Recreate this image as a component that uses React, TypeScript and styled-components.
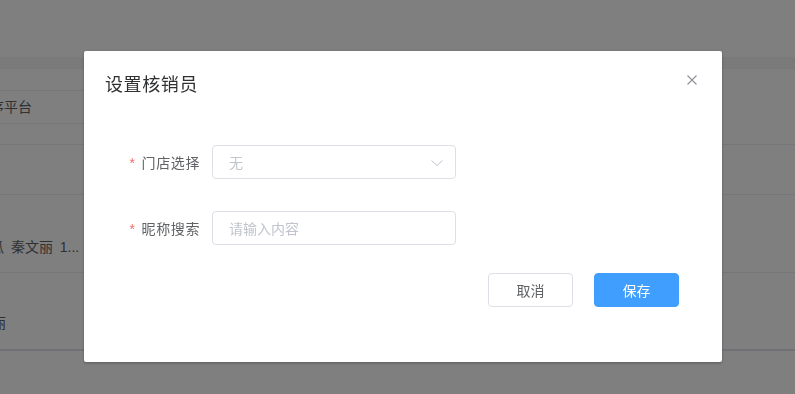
import styled, { createGlobalStyle } from 'styled-components'

const GlobalStyle = createGlobalStyle`
  html, body {
    margin: 0;
    padding: 0;
    background: #fff;
    font-family: "Liberation Sans", "Noto Sans CJK SC", sans-serif;
    font-size: 14px;
    color: #606266;
  }
  * { box-sizing: border-box; }
`

// page behind the mask
const Page = styled.div`
  height: 394px;
  padding-top: 57px;
  overflow: hidden;
`

const TableHead = styled.div`
  height: 12px;
  background: #f5f5f5;
`

const Row = styled.div<{ $h: number; $pad?: number; $thick?: boolean }>`
  height: ${(p) => p.$h}px;
  padding-top: ${(p) => p.$pad ?? 0}px;
  border-bottom: ${(p) => (p.$thick ? 2 : 1)}px solid ${(p) => (p.$thick ? '#e0e2ea' : '#ebeef5')};
  line-height: 20px;
  white-space: nowrap;
  overflow: hidden;
`

const SearchBox = styled.div`
  width: 420px;
  height: 34px;
  border-top: 1px solid #ebeef5;
  border-bottom: 1px solid #ebeef5;
  display: flex;
  align-items: center;
`

const CellText = styled.span<{ $shift: number }>`
  display: inline-block;
  margin-left: ${(p) => p.$shift}px;
  color: #606266;
  word-spacing: 3px;
`

// dialog
const Mask = styled.div`
  position: fixed;
  inset: 0;
  background: rgba(0, 0, 0, 0.5);
  padding: 51px 0 0 84px;
`

const Dialog = styled.div`
  position: relative;
  width: 638px;
  height: 311px;
  background: #fff;
  border-radius: 2px;
  box-shadow: 0 1px 3px rgba(0, 0, 0, 0.3);
  display: flex;
  flex-direction: column;
`

const Header = styled.div`
  padding: 22px 20px 8px 21px;
`

const Title = styled.span`
  font-size: 18px;
  line-height: 24px;
  letter-spacing: 0.6px;
  color: #303133;
`

const CloseButton = styled.button`
  position: absolute;
  top: 24px;
  right: 25px;
  width: 10px;
  height: 10px;
  padding: 0;
  border: none;
  background: none;
  display: flex;
`

const Body = styled.div`
  padding: 40px 0 0 20px;
  display: flex;
  flex-direction: column;
  gap: 32px;
`

const FormItem = styled.div`
  display: flex;
  align-items: center;
  height: 34px;
`

const Label = styled.label`
  width: 108px;
  padding-right: 12px;
  text-align: right;
  color: #606266;
  font-size: 14px;
  letter-spacing: 0.6px;

  &::before {
    content: '*';
    color: #f56c6c;
    margin-right: 6px;
  }
`

const Field = styled.div`
  position: relative;
  width: 244px;
  height: 34px;
  border: 1px solid #dcdfe6;
  border-radius: 4px;
  display: flex;
  align-items: center;
  padding: 0 15px 0 16px;
`

const Placeholder = styled.span`
  color: #c0c4cc;
  font-size: 14px;
`

const Arrow = styled.svg`
  position: absolute;
  right: 12px;
  top: 14px;
`

const Footer = styled.div`
  margin-top: 28px;
  padding-right: 43px;
  display: flex;
  justify-content: flex-end;
  gap: 21px;
`

const Button = styled.button<{ $primary?: boolean }>`
  width: 85px;
  height: 34px;
  border-radius: 4px;
  font-family: inherit;
  font-size: 14px;
  border: 1px solid ${(p) => (p.$primary ? '#409eff' : '#dcdfe6')};
  background: ${(p) => (p.$primary ? '#409eff' : '#fff')};
  color: ${(p) => (p.$primary ? '#fff' : '#606266')};
`

function App() {
  return (
    <>
      <GlobalStyle />
      <Page>
        <TableHead />
        <Row $h={76} $pad={21}>
          <SearchBox>
            <CellText $shift={-38}>小程序平台</CellText>
          </SearchBox>
        </Row>
        <Row $h={50} />
        <Row $h={78} $pad={42}>
          <CellText $shift={-24}>西瓜 秦文丽 1...</CellText>
        </Row>
        <Row $h={78} $pad={40} $thick>
          <CellText $shift={-22}>美丽</CellText>
        </Row>
      </Page>

      <Mask>
        <Dialog>
          <Header>
            <Title>设置核销员</Title>
            <CloseButton aria-label="关闭">
              <svg width="10" height="10" viewBox="0 0 10 10">
                <path d="M0.5 0.5 L9.5 9.5 M9.5 0.5 L0.5 9.5" stroke="#909399" strokeWidth="1.2" fill="none" />
              </svg>
            </CloseButton>
          </Header>
          <Body>
            <FormItem>
              <Label>门店选择</Label>
              <Field>
                <Placeholder>无</Placeholder>
                <Arrow width="12" height="6" viewBox="0 0 12 6">
                  <path d="M0.5 0.5 L6 5.5 L11.5 0.5" stroke="#c0c4cc" strokeWidth="1" fill="none" />
                </Arrow>
              </Field>
            </FormItem>
            <FormItem>
              <Label>昵称搜索</Label>
              <Field>
                <Placeholder>请输入内容</Placeholder>
              </Field>
            </FormItem>
          </Body>
          <Footer>
            <Button>取消</Button>
            <Button $primary>保存</Button>
          </Footer>
        </Dialog>
      </Mask>
    </>
  )
}

export default App
